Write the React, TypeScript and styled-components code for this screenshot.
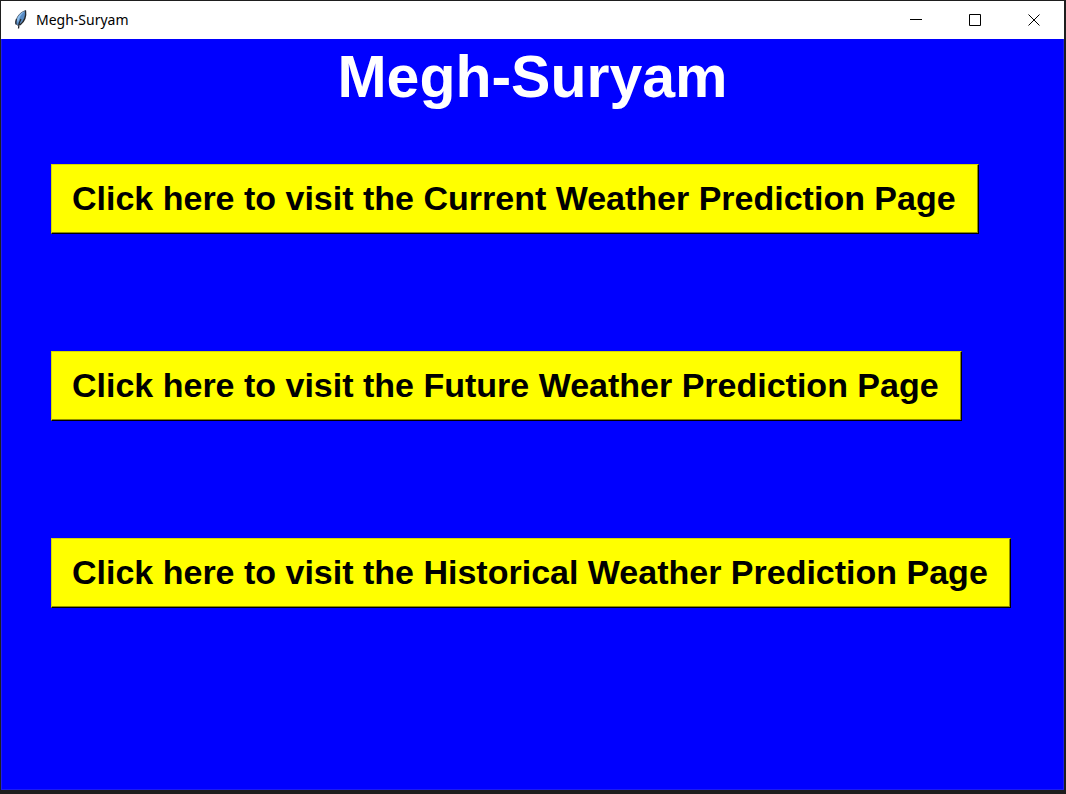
import React from "react";
import styled, { createGlobalStyle } from "styled-components";

const GlobalStyle = createGlobalStyle`
  * { box-sizing: border-box; }
  body { margin: 0; background: #1e1e1e; }
`;

const Desktop = styled.div`
  display: flex;
  min-height: 100vh;
  padding: 1px 2px 4px 1px;
  background: #1e1e1e;
`;

const Window = styled.div`
  flex: 1;
  min-width: 0;
  display: flex;
  flex-direction: column;
  background: #0000ff;
`;

const TitleBar = styled.header`
  display: flex;
  align-items: center;
  height: 38px;
  padding: 0 1px 0 11px;
  background: #ffffff;
`;

const Caption = styled.span`
  flex: 1;
  padding-left: 6px;
  font: 14px/20px "Noto Sans", "Open Sans", sans-serif;
  color: #000000;
`;

const WindowButton = styled.button`
  display: flex;
  align-items: center;
  justify-content: center;
  width: 59px;
  height: 38px;
  padding: 0;
  border: 0;
  background: transparent;
`;

const Content = styled.main`
  flex: 1;
  display: flex;
  flex-direction: column;
  border: 1px solid #1c1cf0;
  border-top: 0;
  font-family: "Liberation Sans", Arial, sans-serif;
  font-weight: bold;
`;

const Heading = styled.h1`
  margin: 0;
  padding-top: 4px;
  font-size: 59px;
  line-height: 68px;
  text-align: center;
  color: #ffffff;
`;

const Pages = styled.nav`
  display: flex;
  flex-direction: column;
  align-items: flex-start;
  gap: 117px;
  padding: 53px 49px 0;
`;

const PageButton = styled.button`
  height: 70px;
  padding: 0 22px 2px 20px;
  border: 1px solid;
  border-color: #d6d600 #000000 #000000 #d6d600;
  box-shadow: inset -1px -1px #8f8f00;
  background: #ffff00;
  color: #000000;
  font: bold 34px/40px "Liberation Sans", Arial, sans-serif;
  white-space: nowrap;
`;

const Feather = () => (
  <svg width="18" height="22" viewBox="0 0 18 22" aria-hidden="true">
    <path d="M13.5 1.5C9 3 6 6 4.500 10c-.8 2-.8 4-.5 5l2 1.500c4-2 6.500-5.500 7-9.500 .5-2 .8-4 .5-5.500Z" fill="#578bc4" stroke="#4c5967" strokeWidth=".8" />
    <path d="M12.500 2.500C8 4.500 6 7 5 11l1 3C7 9 9 5 12.500 2.500Z" fill="#91c0ed" />
    <path d="M13.500 1.500c.8 5-.5 10.500-5.500 14.500M9 10c-2 3-2.500 6-2.500 9.500" fill="none" stroke="#22272e" strokeWidth="1.3" />
    <path d="M4.500 10c-.8 2-.8 4-.5 5.500" fill="none" stroke="#252b33" strokeWidth="1.2" />
  </svg>
);

const glyphs = {
  Minimize: "M0 5.5h12",
  Maximize: "M.5.5h11v11H.5z",
  Close: "M.5.5l11 11M11.5.5l-11 11",
};

const pages = ["Current", "Future", "Historical"];

export default function App() {
  return (
    <Desktop>
      <GlobalStyle />
      <Window>
        <TitleBar>
          <Feather />
          <Caption>Megh-Suryam</Caption>
          {Object.entries(glyphs).map(([name, d]) => (
            <WindowButton key={name} type="button" aria-label={name}>
              <svg width="12" height="12" viewBox="0 0 12 12" aria-hidden="true">
                <path d={d} fill="none" stroke="#000000" />
              </svg>
            </WindowButton>
          ))}
        </TitleBar>
        <Content>
          <Heading>Megh-Suryam</Heading>
          <Pages>
            {pages.map((page) => (
              <PageButton key={page} type="button">
                Click here to visit the {page} Weather Prediction Page
              </PageButton>
            ))}
          </Pages>
        </Content>
      </Window>
    </Desktop>
  );
}
